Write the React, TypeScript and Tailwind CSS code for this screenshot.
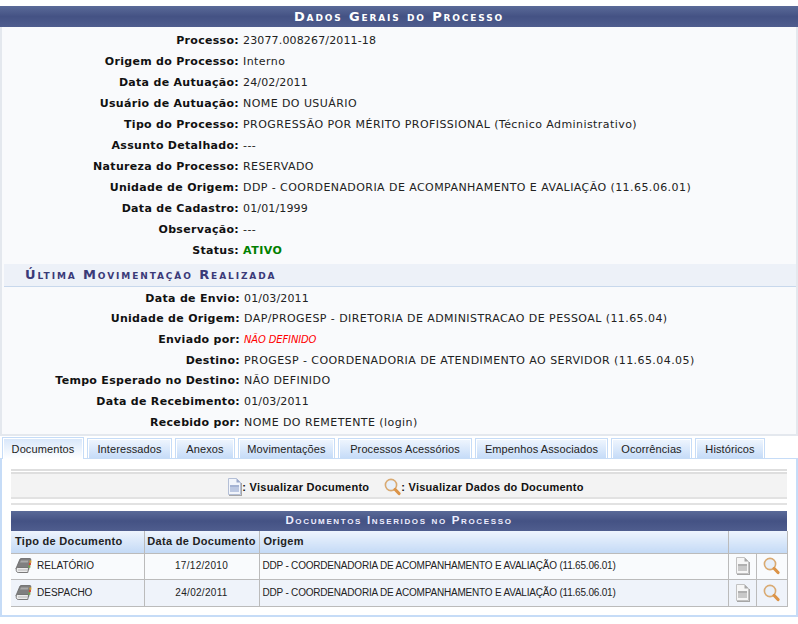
import type { ReactNode } from 'react'

const VERDANA = "font-['DejaVu_Sans',Verdana,sans-serif]"

const topRows: [string, ReactNode][] = [
  ['Processo:', <span className="tracking-[.15px]">23077.008267/2011-18</span>],
  ['Origem do Processo:', 'Interno'],
  ['Data de Autuação:', <span className="tracking-[.15px]">24/02/2011</span>],
  ['Usuário de Autuação:', 'NOME DO USUÁRIO'],
  ['Tipo do Processo:', 'PROGRESSÃO POR MÉRITO PROFISSIONAL (Técnico Administrativo)'],
  ['Assunto Detalhado:', '---'],
  ['Natureza do Processo:', 'RESERVADO'],
  ['Unidade de Origem:', 'DDP - COORDENADORIA DE ACOMPANHAMENTO E AVALIAÇÃO (11.65.06.01)'],
  ['Data de Cadastro:', <span className="tracking-[.15px]">01/01/1999</span>],
  ['Observação:', '---'],
  ['Status:', <b className="tracking-[.5px] text-[#008000]">ATIVO</b>],
]

const moveRows: [string, ReactNode][] = [
  ['Data de Envio:', <span className="tracking-[.15px]">01/03/2011</span>],
  ['Unidade de Origem:', 'DAP/PROGESP - DIRETORIA DE ADMINISTRACAO DE PESSOAL (11.65.04)'],
  ['Enviado por:', <i className="text-[10px] tracking-[-.15px] text-[#ff0000]">NÃO DEFINIDO</i>],
  ['Destino:', 'PROGESP - COORDENADORIA DE ATENDIMENTO AO SERVIDOR (11.65.04.05)'],
  ['Tempo Esperado no Destino:', 'NÃO DEFINIDO'],
  ['Data de Recebimento:', <span className="tracking-[.15px]">01/03/2011</span>],
  ['Recebido por:', 'NOME DO REMETENTE (login)'],
]

const tabs = [
  { name: 'Documentos', w: 'w-[82px]' },
  { name: 'Interessados', w: 'w-[85px]' },
  { name: 'Anexos', w: 'w-[60px]' },
  { name: 'Movimentações', w: 'w-[97px]' },
  { name: 'Processos Acessórios', w: 'w-[134px]' },
  { name: 'Empenhos Associados', w: 'w-[133px]' },
  { name: 'Ocorrências', w: 'w-[81px]' },
  { name: 'Históricos', w: 'w-[70px]' },
]

function DocIcon({ grey }: { grey?: boolean }) {
  return (
    <svg width="15" height="18" viewBox="0 0 15 18" className="shrink-0">
      <path d="M1.5 .5H9.5L13.5 4.5V16.5H1.5Z" fill={grey ? '#f6f6f6' : '#f2f5fb'} stroke={grey ? '#c2c2c2' : '#b4bfd6'} />
      <path d="M9.5 .5V4.5H13.5Z" fill={grey ? '#a8a8a8' : '#9aa8ca'} />
      <rect x="3" y="7" width="9" height="7" fill={grey ? '#c9c9c9' : '#bcc8e2'} />
      <rect x="3" y="7" width="9" height="2" fill={grey ? '#b0b0b0' : '#a5b3d3'} />
      <path d="M2 17.5H15M14.5 5V18" stroke="#a6a6a6" fill="none" />
    </svg>
  )
}

function LupaIcon() {
  return (
    <svg width="17" height="18" viewBox="0 0 17 18" className="shrink-0">
      <circle cx="7" cy="7" r="5.6" fill="#e8f0fa" stroke="#d9aa72" strokeWidth="1.6" />
      <path d="M11.2 11.5L15 15.5" stroke="#dc9448" strokeWidth="3.2" strokeLinecap="round" />
    </svg>
  )
}

function BookIcon() {
  return (
    <svg width="17" height="16" viewBox="0 0 17 16" className="shrink-0">
      <path d="M5 1C5.5 .5 6 .5 7 .5H15C15.6 .5 16 1 15.8 1.8L13.6 12H2.5L1 10.5Z" fill="#7f7f7f" stroke="#666" strokeWidth=".8" />
      <path d="M6 2.5H13.5L12.8 4.5H5Z" fill="#a9a9a9" />
      <path d="M1.2 11C1.2 10 2 9.5 3 9.5H13.6L12.8 14.5H3.2C2 14.5 1 13.5 1.2 11Z" fill="#ececec" stroke="#6d6d6d" strokeWidth=".9" />
      <path d="M3 12H12.6" stroke="#b9b9b9" />
      <rect x="14.4" y="2.5" width="2" height="2.2" fill="#d8a02e" />
      <rect x="13.9" y="5" width="2" height="2.2" fill="#d44a32" />
      <rect x="13.4" y="7.5" width="2" height="2.2" fill="#6fa84a" />
    </svg>
  )
}

function InfoRows({ rows, labelW, rowH }: { rows: [string, ReactNode][]; labelW: string; rowH: string }) {
  return (
    <div>
      {rows.map(([label, value]) => (
        <div key={label} className={`flex items-center ${rowH}`}>
          <div className={`${labelW} shrink-0 pr-[3px] text-right font-bold tracking-[.3px] text-[#111]`}>{label}</div>
          <div className="pl-px tracking-[.43px] text-[#222]">{value}</div>
        </div>
      ))}
    </div>
  )
}

const headBar = 'bg-[linear-gradient(#5a6a98_0%,#445284_50%,#4f5d8e_100%)]'
const headCell = 'border-r border-[#bbbbbb] bg-[linear-gradient(#eef4fd,#c4daf6)] px-[4px] text-left font-bold tracking-[.3px] whitespace-nowrap text-[#222]'

function DocRow({ tipo, data, alt, h }: { tipo: string; data: string; alt?: boolean; h: string }) {
  const bg = alt ? 'bg-[#eff3fa]' : 'bg-[#f9fbfd]'
  return (
    <tr className={`${bg} ${h} border-b border-[#bbbbbb]`}>
      <td className="border-r border-[#bbbbbb] pl-[4px] text-[10px]">
        <div className="flex items-center gap-[5px]">
          <BookIcon />
          {tipo}
        </div>
      </td>
      <td className="border-r border-[#bbbbbb] text-center text-[10px] tracking-[.3px]">{data}</td>
      <td className="border-r border-[#bbbbbb] pl-[3px] text-[10px] tracking-[-.2px]">DDP - COORDENADORIA DE ACOMPANHAMENTO E AVALIAÇÃO (11.65.06.01)</td>
      <td className="border-r border-[#bbbbbb]">
        <div className="flex justify-center">
          <DocIcon grey />
        </div>
      </td>
      <td className="border-r border-[#bbbbbb]">
        <div className="flex justify-center">
          <LupaIcon />
        </div>
      </td>
    </tr>
  )
}

export default function App() {
  return (
    <div className={`h-[624px] w-[798px] overflow-hidden bg-white pt-[6px] text-[11px] leading-none ${VERDANA}`}>
      {/* dados gerais */}
      <div className={`${headBar} flex h-[21px] items-center justify-center text-[13px] font-bold tracking-[1.85px] text-white [font-variant:small-caps]`}>
        Dados Gerais do Processo
      </div>
      <div className="h-[409px] border-x-2 border-b-2 border-[#e4e8ee] bg-[#f9fafc] pt-[3px]">
        <InfoRows rows={topRows} labelW="w-[240px]" rowH="h-[21px]" />
        <div className="mt-[3px] mb-px ml-[2px] h-[23px] border-b border-[#c8d8ec] bg-[#edf1f8] pl-[21px] text-[13px] leading-[22px] font-bold tracking-[1.9px] text-[#3a3a78] [font-variant:small-caps]">
          Última Movimentação Realizada
        </div>
        <InfoRows rows={moveRows} labelW="w-[241px]" rowH="h-[20.67px]" />
      </div>

      {/* abas */}
      <div className="mt-px flex h-[21px] items-end gap-[3px] pl-[2px] font-['Liberation_Sans',Arial,sans-serif]">
        {tabs.map((t, i) => (
          <div
            key={t.name}
            className={`${t.w} flex items-center justify-center border border-b-0 border-[#c6dcf7] pt-px tracking-[.1px] text-[#222] shadow-[inset_1px_1px_0_#fff,inset_-1px_0_0_#fff] ${
              i === 0 ? 'relative -mb-px h-[22px] bg-[linear-gradient(#d7e6fa,#ffffff)]' : 'h-[20px] bg-[linear-gradient(#f0f6fe,#c6dcf8)]'
            }`}
          >
            {t.name}
          </div>
        ))}
      </div>

      <div className="h-[159px] border-2 border-t border-[#c6dcf7] px-[9px] pt-[10px]">
        <div className="border-t-2 border-[#dedede] pt-px">
          <div className="border-t-2 border-[#dedede]">
            <div className="flex h-[23px] items-center justify-center bg-[#f3f3f3] pt-[3px] pl-[13px] font-['Liberation_Sans',Arial,sans-serif] font-bold tracking-[.25px] text-[#111]">
              <DocIcon />
              <span>: Visualizar Documento</span>
              <span className="ml-[15px]">
                <LupaIcon />
              </span>
              <span>: Visualizar Dados do Documento</span>
            </div>
          </div>
          <div className="h-[8px] border-t-2 border-b-2 border-[#e2e2e2] bg-white" />
        </div>

        <div className={`${headBar} mt-[6px] flex h-[20px] items-center justify-center font-['Liberation_Sans',Arial,sans-serif] text-[11.5px] font-bold tracking-[1.65px] text-[#eef] [font-variant:small-caps]`}>
          Documentos Inseridos no Processo
        </div>
        <table className="w-[776px] table-fixed border-collapse font-['Liberation_Sans',Arial,sans-serif] text-[#222]">
          <colgroup>
            <col className="w-[133px]" />
            <col className="w-[115px]" />
            <col className="w-[469px]" />
            <col className="w-[28px]" />
            <col className="w-[31px]" />
          </colgroup>
          <thead>
            <tr className="h-[22px] border-b border-[#bbbbbb]">
              <th className={headCell}>Tipo de Documento</th>
              <th className={`${headCell} !px-0 !text-center`}>Data de Documento</th>
              <th className={headCell}>Origem</th>
              <th colSpan={2} className={headCell}></th>
            </tr>
          </thead>
          <tbody>
            <DocRow tipo="RELATÓRIO" data="17/12/2010" h="h-[26px]" />
            <DocRow tipo="DESPACHO" data="24/02/2011" alt h="h-[27px]" />
          </tbody>
        </table>
      </div>
    </div>
  )
}
